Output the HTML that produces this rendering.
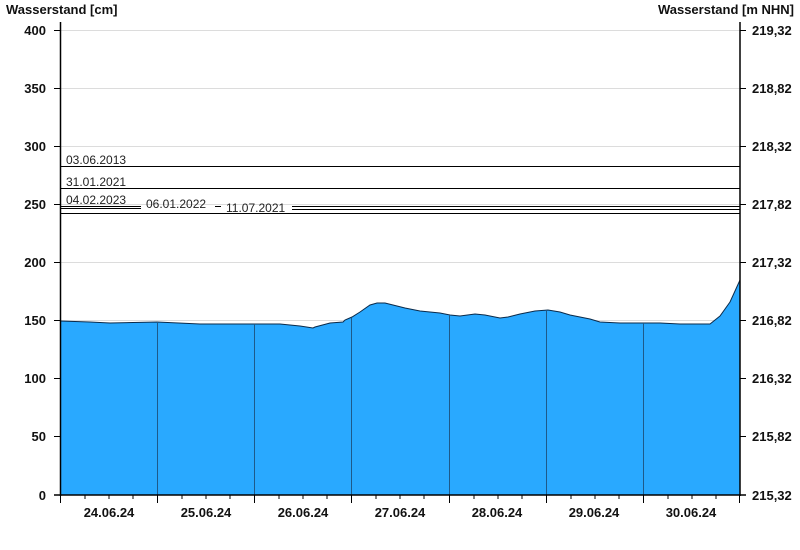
<!DOCTYPE html>
<html><head><meta charset="utf-8"><style>
html,body{margin:0;padding:0;background:#fff}
svg{display:block}
text{font-family:"Liberation Sans",Arial,sans-serif}
</style></head><body>
<svg width="800" height="550" viewBox="0 0 800 550" xmlns="http://www.w3.org/2000/svg">
<g stroke="#dcdcdc" stroke-width="1">
<line x1="60" y1="30.5" x2="740" y2="30.5"/>
<line x1="60" y1="88.5" x2="740" y2="88.5"/>
<line x1="60" y1="146.5" x2="740" y2="146.5"/>
<line x1="60" y1="204.5" x2="740" y2="204.5"/>
<line x1="60" y1="262.5" x2="740" y2="262.5"/>
<line x1="60" y1="320.5" x2="740" y2="320.5"/>
<line x1="60" y1="378.5" x2="740" y2="378.5"/>
<line x1="60" y1="436.5" x2="740" y2="436.5"/>
</g>
<path d="M60,321 L90,322 L110,323 L157,322 L200,324 L254,324 L280,324 L300,326 L313,328 L315,327 L330,323 L343,322 L345,320 L352,317 L360,312 L370,305 L377,303 L385,303 L393,305 L405,308 L420,311 L440,313 L450,315 L460,316 L475,314 L485,315 L500,318 L508,317 L520,314 L535,311 L548,310 L560,312 L570,315 L590,319 L600,322 L620,323 L640,323 L660,323 L680,324 L710,324 L720,316 L730,302 L740,280 L740,495 L60,495 Z" fill="#29a9ff" stroke="none"/>
<path d="M60,321 L90,322 L110,323 L157,322 L200,324 L254,324 L280,324 L300,326 L313,328 L315,327 L330,323 L343,322 L345,320 L352,317 L360,312 L370,305 L377,303 L385,303 L393,305 L405,308 L420,311 L440,313 L450,315 L460,316 L475,314 L485,315 L500,318 L508,317 L520,314 L535,311 L548,310 L560,312 L570,315 L590,319 L600,322 L620,323 L640,323 L660,323 L680,324 L710,324 L720,316 L730,302 L740,280" fill="none" stroke="#0a2a4a" stroke-width="1"/>
<g stroke="#1d5a8a" stroke-width="1">
<line x1="157.5" y1="322" x2="157.5" y2="495"/>
<line x1="254.5" y1="324" x2="254.5" y2="495"/>
<line x1="351.5" y1="318" x2="351.5" y2="495"/>
<line x1="449.5" y1="315" x2="449.5" y2="495"/>
<line x1="546.5" y1="310" x2="546.5" y2="495"/>
<line x1="643.5" y1="323" x2="643.5" y2="495"/>
</g>
<g stroke="#000" stroke-width="1">
<line x1="60" y1="166.5" x2="740" y2="166.5"/>
<line x1="60" y1="188.5" x2="740" y2="188.5"/>
<line x1="60" y1="206.5" x2="141" y2="206.5"/>
<line x1="60" y1="208.5" x2="141" y2="208.5"/>
<line x1="215" y1="206.5" x2="221" y2="206.5"/>
<line x1="292" y1="206.5" x2="740" y2="206.5"/>
<line x1="292" y1="209.5" x2="740" y2="209.5"/>
<line x1="60" y1="213.5" x2="740" y2="213.5"/>
</g>
<g font-size="12" fill="#222">
<text x="66" y="164">03.06.2013</text>
<text x="66" y="186">31.01.2021</text>
<text x="66" y="204">04.02.2023</text>
<text x="146" y="208">06.01.2022</text>
<text x="226" y="212">11.07.2021</text>
</g>
<g stroke="#000" stroke-width="1.5" fill="none">
<line x1="60.5" y1="22" x2="60.5" y2="496"/>
<line x1="740" y1="22" x2="740" y2="496"/>
<line x1="54" y1="495" x2="746" y2="495"/>
</g>
<g stroke="#000" stroke-width="1">
<line x1="54" y1="30.5" x2="60" y2="30.5"/><line x1="54" y1="88.5" x2="60" y2="88.5"/><line x1="54" y1="146.5" x2="60" y2="146.5"/><line x1="54" y1="204.5" x2="60" y2="204.5"/><line x1="54" y1="262.5" x2="60" y2="262.5"/><line x1="54" y1="320.5" x2="60" y2="320.5"/><line x1="54" y1="378.5" x2="60" y2="378.5"/><line x1="54" y1="436.5" x2="60" y2="436.5"/>
<line x1="740" y1="30.5" x2="746" y2="30.5"/><line x1="740" y1="88.5" x2="746" y2="88.5"/><line x1="740" y1="146.5" x2="746" y2="146.5"/><line x1="740" y1="204.5" x2="746" y2="204.5"/><line x1="740" y1="262.5" x2="746" y2="262.5"/><line x1="740" y1="320.5" x2="746" y2="320.5"/><line x1="740" y1="378.5" x2="746" y2="378.5"/><line x1="740" y1="436.5" x2="746" y2="436.5"/>
<line x1="60.5" y1="495" x2="60.5" y2="503"/><line x1="157.5" y1="495" x2="157.5" y2="503"/><line x1="254.5" y1="495" x2="254.5" y2="503"/><line x1="351.5" y1="495" x2="351.5" y2="503"/><line x1="449.5" y1="495" x2="449.5" y2="503"/><line x1="546.5" y1="495" x2="546.5" y2="503"/><line x1="643.5" y1="495" x2="643.5" y2="503"/><line x1="739.5" y1="495" x2="739.5" y2="503"/>
<g id="mt">
<line x1="85" y1="495" x2="85" y2="499"/><line x1="109" y1="495" x2="109" y2="499"/><line x1="133" y1="495" x2="133" y2="499"/>
</g>
<use href="#mt" x="97"/><use href="#mt" x="194"/><use href="#mt" x="291"/><use href="#mt" x="389"/><use href="#mt" x="486"/><use href="#mt" x="583"/>
</g>
<g font-size="13" font-weight="bold" fill="#111">
<text x="6" y="14">Wasserstand [cm]</text>
<text x="794" y="14" text-anchor="end">Wasserstand [m NHN]</text>
</g>
<g font-size="13" font-weight="bold" fill="#111" text-anchor="end">
<text x="46" y="35">400</text><text x="46" y="93">350</text><text x="46" y="151">300</text><text x="46" y="209">250</text><text x="46" y="267">200</text><text x="46" y="325">150</text><text x="46" y="383">100</text><text x="46" y="441">50</text><text x="46" y="500">0</text>
</g>
<g font-size="13" font-weight="bold" fill="#111">
<text x="752" y="35">219,32</text><text x="752" y="93">218,82</text><text x="752" y="151">218,32</text><text x="752" y="209">217,82</text><text x="752" y="267">217,32</text><text x="752" y="325">216,82</text><text x="752" y="383">216,32</text><text x="752" y="441">215,82</text><text x="752" y="500">215,32</text>
</g>
<g font-size="13" font-weight="bold" fill="#111" text-anchor="middle">
<text x="109" y="517">24.06.24</text><text x="206" y="517">25.06.24</text><text x="303" y="517">26.06.24</text><text x="400" y="517">27.06.24</text><text x="497" y="517">28.06.24</text><text x="594" y="517">29.06.24</text><text x="691" y="517">30.06.24</text>
</g>
</svg>
</body></html>
